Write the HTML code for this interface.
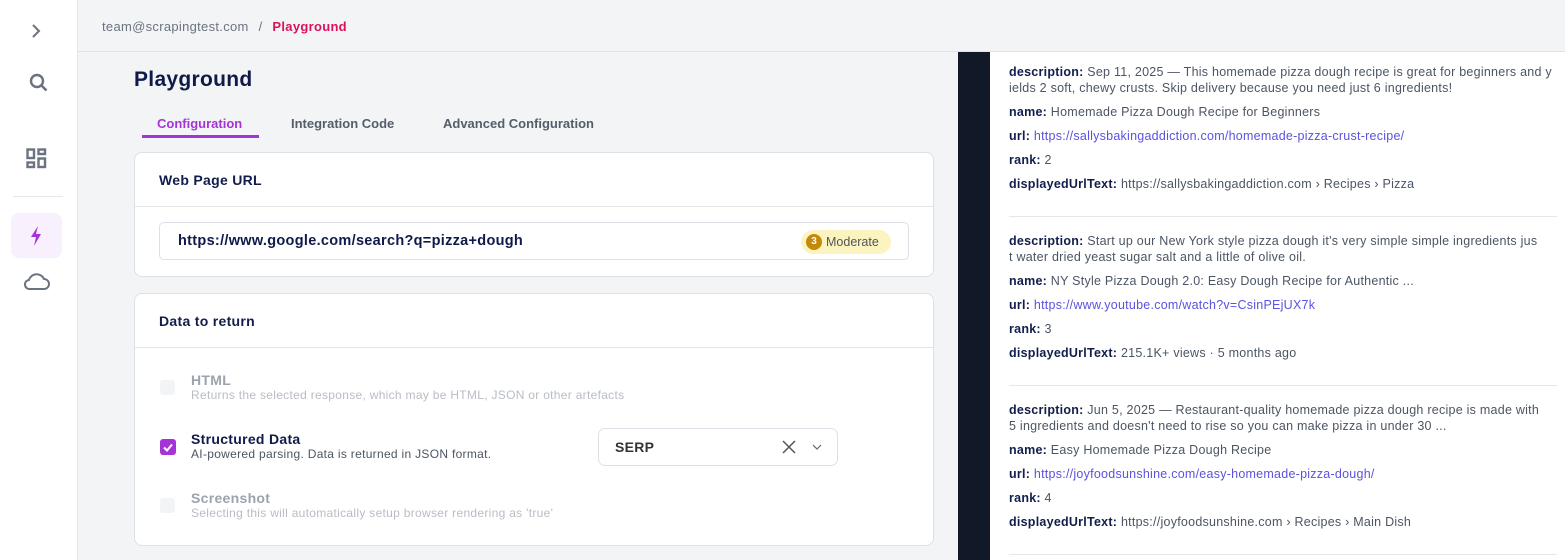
<!DOCTYPE html>
<html><head><meta charset="utf-8"><style>
*{box-sizing:border-box;margin:0;padding:0}
body{width:1565px;height:560px;overflow:hidden;font-family:"Liberation Sans",sans-serif;background:#f3f4f6;position:relative;color:#111d4a}
.abs{position:absolute}
.side{left:0;top:0;width:78px;height:560px;background:#fff;border-right:1px solid #e5e7eb}
.hdr{left:78px;top:0;right:0;height:52px;border-bottom:1px solid #dfe2e7;background:#f3f4f6}
.card{background:#fff;border:1px solid #dde1e7;border-radius:8px;letter-spacing:0.3px}
.rp{left:990px;top:52px;width:575px;height:508px;background:#fff;font-size:12.5px;color:#4b5563;letter-spacing:0.25px}
.rp b{color:#111d4a}
.rp a{color:#5b52e0;text-decoration:none}
.line{position:absolute;left:19px;white-space:nowrap}
</style></head><body>
<div class="abs side">
<svg class="abs" style="left:29px;top:23px" width="14" height="16" viewBox="0 0 14 16"><path d="M4 2l6 6-6 6" stroke="#6b7280" stroke-width="2" fill="none"/></svg>
<svg class="abs" style="left:28px;top:72px" width="22" height="22" viewBox="0 0 22 22"><circle cx="9" cy="9" r="6" stroke="#6b7280" stroke-width="2.4" fill="none"/><path d="M13.5 13.5l5 5" stroke="#6b7280" stroke-width="2.6"/></svg>
<svg class="abs" style="left:26px;top:148px" width="21" height="21" viewBox="0 0 21 21" fill="none" stroke="#6b7280" stroke-width="2.4"><rect x="1.5" y="1.5" width="6.5" height="8.5"/><rect x="12.5" y="1.5" width="6.5" height="4.5"/><rect x="1.5" y="14.5" width="6.5" height="4.5"/><rect x="12.5" y="10.5" width="6.5" height="8.5"/></svg>
<div class="abs" style="left:13px;top:196px;width:50px;height:1px;background:#e5e7eb"></div>
<div class="abs" style="left:11px;top:213px;width:51px;height:45px;background:#f8f0fd;border-radius:8px"></div>
<svg class="abs" style="left:29px;top:225px" width="14" height="22" viewBox="0 0 14 22"><path d="M9 1L2 12h5l-2 9 7-12H7z" fill="#a534d6"/></svg>
<svg class="abs" style="left:23px;top:271px" width="28" height="20" viewBox="0 0 28 20"><path d="M7 18h14a5 5 0 0 0 0-10 8 8 0 0 0-15 1 4.5 4.5 0 0 0 1 9z" stroke="#6b7280" stroke-width="2" fill="none"/></svg>
</div>
<div class="abs hdr"><div class="abs" style="left:24px;top:19px;font-size:13px;color:#6b7280;letter-spacing:0.3px">team@scrapingtest.com <span style="margin:0 6px">/</span> <span style="color:#d6135c;font-weight:bold">Playground</span></div></div>
<div class="abs" style="left:134px;top:68px;font-size:21px;font-weight:bold;color:#0f1a4a;letter-spacing:0.3px">Playground</div>
<div class="abs" style="left:157px;top:116px;font-size:13px;color:#a534d6;font-weight:bold">Configuration</div>
<div class="abs" style="left:142px;top:135px;width:117px;height:3px;background:#a534d6"></div>
<div class="abs" style="left:291px;top:116px;font-size:13px;color:#555d6b;font-weight:bold">Integration Code</div>
<div class="abs" style="left:443px;top:116px;font-size:13px;color:#555d6b;font-weight:bold">Advanced Configuration</div>
<div class="abs card" style="left:134px;top:152px;width:800px;height:125px">
<div class="abs" style="left:24px;top:19px;font-size:14px;font-weight:bold">Web Page URL</div>
<div class="abs" style="left:0;top:53px;width:798px;height:1px;background:#e3e6eb"></div>
<div class="abs" style="left:24px;top:69px;width:750px;height:38px;border:1px solid #dde1e7;border-radius:5px">
<div class="abs" style="left:18px;top:10px;font-size:14.5px;font-weight:bold;color:#0f1a4a">https://www.google.com/search?q=pizza+dough</div>
<div class="abs" style="left:641px;top:7px;width:90px;height:24px;background:#fcf4c0;border-radius:12px;letter-spacing:0"><div class="abs" style="left:5px;top:4px;width:16px;height:16px;border-radius:8px;background:#c48a07;color:#fff;font-size:10px;font-weight:bold;text-align:center;line-height:16px">3</div><div class="abs" style="left:25px;top:5px;font-size:12.5px;color:#555">Moderate</div></div>
</div></div>
<div class="abs card" style="left:134px;top:293px;width:800px;height:253px">
<div class="abs" style="left:24px;top:19px;font-size:14px;font-weight:bold">Data to return</div>
<div class="abs" style="left:0;top:53px;width:798px;height:1px;background:#e3e6eb"></div>
<div class="abs" style="left:25px;top:86px;width:15px;height:15px;background:#f3f4f6;border-radius:3px"></div>
<div class="abs" style="left:56px;top:78px;font-size:14px;font-weight:bold;color:#9ca3af">HTML</div>
<div class="abs" style="left:56px;top:94px;font-size:12px;color:#b8bdc5">Returns the selected response, which may be HTML, JSON or other artefacts</div>
<div class="abs" style="left:25px;top:145px;width:16px;height:16px;background:#a534d6;border-radius:3px"><svg width="16" height="16"><path d="M4 8.5l3 3 5-6" stroke="#fff" stroke-width="2" fill="none"/></svg></div>
<div class="abs" style="left:56px;top:137px;font-size:14px;font-weight:bold;color:#0f1a4a">Structured Data</div>
<div class="abs" style="left:56px;top:153px;font-size:12px;color:#4b5563">AI-powered parsing. Data is returned in JSON format.</div>
<div class="abs" style="left:463px;top:134px;width:240px;height:38px;border:1px solid #dde1e7;border-radius:7px">
<div class="abs" style="left:16px;top:10px;font-size:14px;font-weight:bold;color:#333">SERP</div>
<svg class="abs" style="left:182px;top:10px" width="16" height="16"><path d="M2 2l12 12M14 2L2 14" stroke="#555" stroke-width="1.5"/></svg>
<svg class="abs" style="left:212px;top:13px" width="12" height="10"><path d="M2 3l4 4 4-4" stroke="#666" stroke-width="1.2" fill="none"/></svg>
</div>
<div class="abs" style="left:25px;top:204px;width:15px;height:15px;background:#f3f4f6;border-radius:3px"></div>
<div class="abs" style="left:56px;top:196px;font-size:14px;font-weight:bold;color:#9ca3af">Screenshot</div>
<div class="abs" style="left:56px;top:212px;font-size:12px;color:#b8bdc5">Selecting this will automatically setup browser rendering as 'true'</div>
</div>
<div class="abs" style="left:958px;top:52px;width:32px;height:508px;background:#111827"></div>
<div class="abs rp">
<div class="line" style="top:13px"><b>description:</b> Sep 11, 2025 — This homemade pizza dough recipe is great for beginners and y</div>
<div class="line" style="top:29px">ields 2 soft, chewy crusts. Skip delivery because you need just 6 ingredients!</div>
<div class="line" style="top:53px"><b>name:</b> Homemade Pizza Dough Recipe for Beginners</div>
<div class="line" style="top:77px"><b>url:</b> <a>https://sallysbakingaddiction.com/homemade-pizza-crust-recipe/</a></div>
<div class="line" style="top:101px"><b>rank:</b> 2</div>
<div class="line" style="top:125px"><b>displayedUrlText:</b> https://sallysbakingaddiction.com › Recipes › Pizza</div>
<div class="abs" style="left:19px;top:164px;width:548px;height:1px;background:#e5e7eb"></div>
<div class="line" style="top:182px"><b>description:</b> Start up our New York style pizza dough it's very simple simple ingredients jus</div>
<div class="line" style="top:198px">t water dried yeast sugar salt and a little of olive oil.</div>
<div class="line" style="top:222px"><b>name:</b> NY Style Pizza Dough 2.0: Easy Dough Recipe for Authentic ...</div>
<div class="line" style="top:246px"><b>url:</b> <a>https://www.youtube.com/watch?v=CsinPEjUX7k</a></div>
<div class="line" style="top:270px"><b>rank:</b> 3</div>
<div class="line" style="top:294px"><b>displayedUrlText:</b> 215.1K+ views · 5 months ago</div>
<div class="abs" style="left:19px;top:333px;width:548px;height:1px;background:#e5e7eb"></div>
<div class="line" style="top:351px"><b>description:</b> Jun 5, 2025 — Restaurant-quality homemade pizza dough recipe is made with</div>
<div class="line" style="top:367px">5 ingredients and doesn't need to rise so you can make pizza in under 30 ...</div>
<div class="line" style="top:391px"><b>name:</b> Easy Homemade Pizza Dough Recipe</div>
<div class="line" style="top:415px"><b>url:</b> <a>https://joyfoodsunshine.com/easy-homemade-pizza-dough/</a></div>
<div class="line" style="top:439px"><b>rank:</b> 4</div>
<div class="line" style="top:463px"><b>displayedUrlText:</b> https://joyfoodsunshine.com › Recipes › Main Dish</div>
<div class="abs" style="left:19px;top:502px;width:548px;height:1px;background:#e5e7eb"></div>
</div>
</body></html>
